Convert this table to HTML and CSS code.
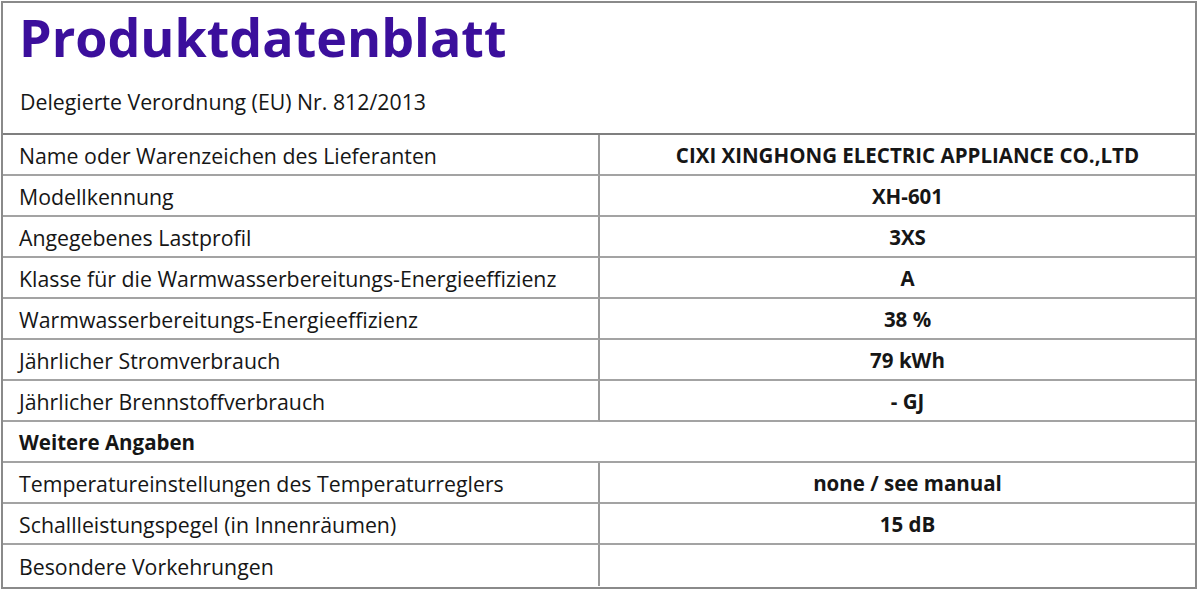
FILE: index.html
```html
<!DOCTYPE html>
<html lang="de">
<head>
<meta charset="utf-8">
<title>Produktdatenblatt</title>
<link rel="stylesheet" href="styles.css">
</head>
<body>
<div class="sheet">
  <div class="head">
    <h1 class="title">Produktdatenblatt</h1>
    <p class="subtitle">Delegierte Verordnung (EU) Nr. 812/2013</p>
  </div>
  <div class="grid">
    <div class="label">Name oder Warenzeichen des Lieferanten</div>
    <div class="value">CIXI XINGHONG ELECTRIC APPLIANCE CO.,LTD</div>
    <div class="label">Modellkennung</div>
    <div class="value">XH-601</div>
    <div class="label">Angegebenes Lastprofil</div>
    <div class="value">3XS</div>
    <div class="label">Klasse für die Warmwasserbereitungs-Energieeffizienz</div>
    <div class="value">A</div>
    <div class="label">Warmwasserbereitungs-Energieeffizienz</div>
    <div class="value">38 %</div>
    <div class="label">Jährlicher Stromverbrauch</div>
    <div class="value">79 kWh</div>
    <div class="label">Jährlicher Brennstoffverbrauch</div>
    <div class="value">- GJ</div>
    <div class="label section">Weitere Angaben</div>
    <div class="label">Temperatureinstellungen des Temperaturreglers</div>
    <div class="value">none / see manual</div>
    <div class="label">Schallleistungspegel (in Innenräumen)</div>
    <div class="value">15 dB</div>
    <div class="label">Besondere Vorkehrungen</div>
    <div class="value"></div>
  </div>
</div>
</body>
</html>
```

FILE: styles.css
```css
html, body {
  margin: 0;
  padding: 0;
  background: #ffffff;
}

body {
  font-family: "Open Sans", "Liberation Sans", sans-serif;
  color: #161616;
}

.sheet {
  margin: 1px 0 0 1px;
  width: 1196px;
  border: 2px solid #8a8a8a;
  box-sizing: border-box;
  height: 588px;
}

.head {
  height: 132px;
  border-bottom: 2px solid #7f7f7f;
  padding: 0 0 0 16px;
  box-sizing: border-box;
}

.title {
  margin: 0;
  padding-top: 2px;
  font-size: 52px;
  line-height: 64px;
  font-weight: 700;
  color: #3b0f9c;
}

.subtitle {
  margin: 0;
  padding-top: 21px;
  font-size: 21.3px;
  line-height: 24px;
  padding-left: 1px;
}

.grid {
  display: grid;
  grid-template-columns: 597px 1fr;
  grid-auto-rows: 41px;
}

.label, .value {
  display: flex;
  align-items: center;
  font-size: 21.3px;
  border-bottom: 2px solid #a3a3a3;
  box-sizing: border-box;
  padding-top: 1px;
}

.label {
  padding-left: 16px;
  border-right: 2px solid #9a9a9a;
}

.value {
  justify-content: center;
  font-weight: 700;
  font-size: 20.5px;
  padding-left: 20px;
}

.section {
  grid-column: 1 / -1;
  border-right: none;
  font-weight: 700;
  font-size: 20.5px;
}

.grid > :nth-last-child(-n+2) {
  border-bottom: none;
}
```
